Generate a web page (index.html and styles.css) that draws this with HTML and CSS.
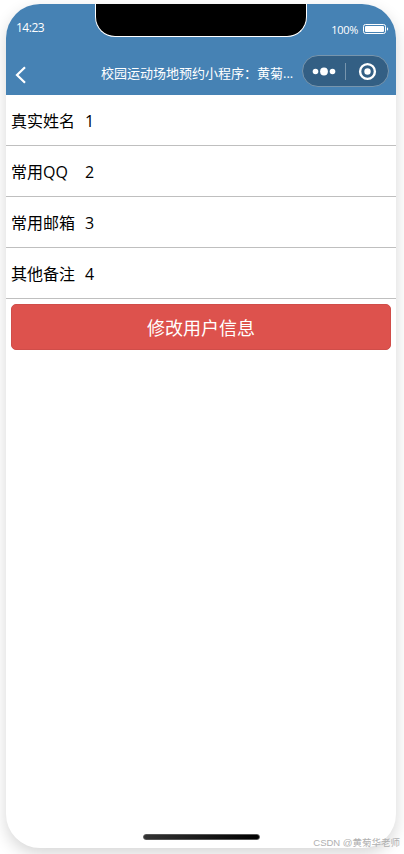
FILE: index.html
```html
<!DOCTYPE html>
<html lang="zh-CN">
<head>
    <meta charset="UTF-8">
    <meta name="viewport" content="width=device-width, initial-scale=1.0">
    <title>校园运动场地预约小程序</title>
    <link rel="stylesheet" href="styles.css">
</head>
<body>

    <div class="phone">
        <!-- Header -->
        <div class="header">
            <div class="notch"></div>
            <div class="status-bar">
                <span class="time">14:23</span>
                <span class="percent">100%</span>
                <svg class="battery" width="26" height="12" viewBox="0 0 26 12">
                    <rect x="0.5" y="1.5" width="22" height="9" rx="2" fill="none" stroke="#fff"/>
                    <rect x="2" y="3" width="19" height="6" rx="1" fill="#fff"/>
                    <path d="M24 4.2c1.6.6 1.6 3 0 3.6z" fill="#fff"/>
                </svg>
            </div>
            <div class="nav-bar">
                <svg class="back" width="12" height="18" viewBox="0 0 12 18">
                    <path d="M10 1.2L2 9l8 7.8" fill="none" stroke="#fff" stroke-width="2.2"/>
                </svg>
                <span class="title">校园运动场地预约小程序：黄菊...</span>
                <div class="capsule">
                    <svg width="85" height="30" viewBox="0 0 85 30">
                        <circle cx="12.5" cy="15.5" r="2.8" fill="#fff"/>
                        <circle cx="21" cy="15.5" r="3.9" fill="#fff"/>
                        <circle cx="29.5" cy="15.5" r="2.8" fill="#fff"/>
                        <path d="M42.5 7v17" stroke="#7795ad"/>
                        <circle cx="64.5" cy="15.5" r="7.4" fill="none" stroke="#fff" stroke-width="2.4"/>
                        <circle cx="64.5" cy="15.5" r="3.2" fill="#fff"/>
                    </svg>
                </div>
            </div>
        </div>

        <!-- User info -->
        <div class="content">
            <div class="row">
                <span class="label">真实姓名</span>
                <span class="value">1</span>
            </div>
            <div class="row">
                <span class="label">常用QQ</span>
                <span class="value">2</span>
            </div>
            <div class="row">
                <span class="label">常用邮箱</span>
                <span class="value">3</span>
            </div>
            <div class="row">
                <span class="label">其他备注</span>
                <span class="value">4</span>
            </div>
            <button type="button" class="btn">修改用户信息</button>
        </div>

        <div class="home-bar"></div>
    </div>

    <div class="watermark">CSDN @黄菊华老师</div>

</body>
</html>
```

FILE: styles.css
```css
* {
    box-sizing: border-box;
}
body {
    font-family: "Open Sans", "Noto Sans CJK SC", sans-serif;
    background-color: #fff;
    margin: 0;
    padding: 4px 8px 6px 6px;
    height: 854px;
    overflow: hidden;
}
.phone {
    width: 390px;
    height: 844px;
    display: flex;
    flex-direction: column;
    align-items: center;
    background-color: #fff;
    border-radius: 34px;
    overflow: hidden;
    box-shadow: 0 6px 16px rgba(0, 0, 0, 0.16);
}
.header {
    position: relative;
    width: 100%;
    height: 91px;
    background-color: #4682b4;
    color: white;
}
.notch {
    position: absolute;
    left: 89px;
    top: 0;
    width: 212px;
    height: 33px;
    background-color: #000;
    border: 1px solid #fff;
    border-top: none;
    border-radius: 0 0 20px 20px;
}
.status-bar {
    display: flex;
    align-items: center;
    height: 51px;
    padding: 0 7px 0 10px;
    font-size: 12px;
    line-height: 16px;
}
.time {
    flex: 1;
    margin-top: -4px;
    letter-spacing: -0.5px;
}
.percent {
    margin-right: 5px;
    font-size: 11px;
    letter-spacing: -0.3px;
}
.battery {
    display: block;
    margin-top: -1px;
}
.nav-bar {
    display: flex;
    align-items: center;
    height: 32px;
    padding: 0 7px 0 9px;
}
.back {
    margin-top: 8px;
}
.title {
    margin-left: 74px;
    margin-top: 3px;
    font-size: 13px;
    line-height: 20px;
    white-space: nowrap;
}
.capsule {
    width: 87px;
    height: 32px;
    margin-left: auto;
    background-color: #335f84;
    border: 1px solid #7795ad;
    border-radius: 16px;
}
.capsule svg {
    display: block;
}
.content {
    width: 100%;
    flex: 1;
}
.row {
    display: flex;
    align-items: center;
    height: 51px;
    padding: 2px 5px 0;
    border-bottom: 1px solid #bfbfbf;
    font-size: 16px;
    line-height: 24px;
    color: #000;
}
.label {
    width: 74px;
}
.btn {
    display: block;
    width: 380px;
    height: 46px;
    margin: 5px;
    padding: 1px 0 0;
    background-color: #dd524d;
    border: 1px solid #d04d49;
    border-radius: 5px;
    color: white;
    font-family: inherit;
    font-size: 18px;
    line-height: 44px;
}
.home-bar {
    width: 117px;
    height: 6px;
    margin-bottom: 8px;
    background: linear-gradient(to right, #333, #000);
    border: 1px solid #555;
    border-radius: 3px;
}
.watermark {
    position: absolute;
    right: 4px;
    bottom: 4px;
    font-family: "Liberation Sans", "Noto Sans CJK SC", sans-serif;
    font-size: 9.5px;
    line-height: 14px;
    color: #b0b0b0;
    white-space: nowrap;
}
```
